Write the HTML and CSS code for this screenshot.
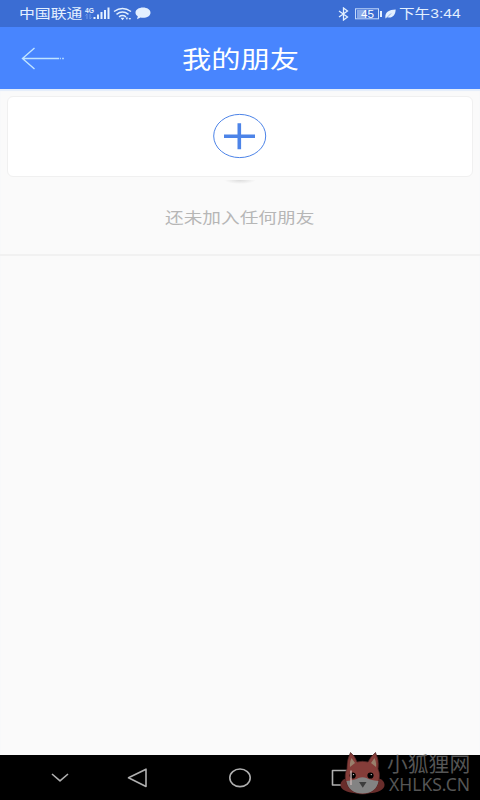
FILE: index.html
```html
<!DOCTYPE html>
<html lang="zh-CN">
<head>
    <meta charset="UTF-8">
    <meta name="viewport" content="width=device-width, initial-scale=1.0">
    <title>我的朋友</title>
    <link rel="stylesheet" href="styles.css">
</head>
<body>

<div class="screen">
    <div class="status-bar">
        <div class="status-left">
            <span class="carrier"><span class="wide">中国联通</span></span>
            <svg class="signal" width="26" height="15" viewBox="0 0 26 15">
                <text x="1" y="6.500" textLength="9" lengthAdjust="spacingAndGlyphs">4G</text>
                <path class="faint" d="M3 8v5M1.500 9.500L3 8M6 8v5M7.500 11.500L6 13"/>
                <path d="M10.500 11v2M14 8.500v4.500M17.500 6v7M21 4v9M24.500 1.500v11.500"/>
            </svg>
            <svg class="wifi" width="19" height="14" viewBox="0 0 19 14">
                <path d="M1 4.500Q9.500-1.500 18 4.500M3.500 7.300Q9.500 2.800 15.500 7.300M6 9.800Q9.500 7.400 13 9.800"/>
                <path class="fill" d="M7.500 10.800h4l-2 2.500zM12.500 10.500h2.500l-1 2.500zM15.500 11h2.500l-1 2z"/>
            </svg>
            <svg class="bubble" width="16" height="13" viewBox="0 0 16 13">
                <path d="M8 .5c4.200 0 7.500 2.200 7.500 5.200S12.200 10.800 8 10.800c-.9 0-1.700-.1-2.500-.3L2 12.300l.8-3C1.300 8.300.5 7.100.5 5.700.5 2.700 3.800.5 8 .5z"/>
            </svg>
        </div>
        <div class="status-right">
            <svg class="bluetooth" width="11" height="14" viewBox="0 0 11 14">
                <path d="M1 4l8.500 6-4 3V1l4 3L1 10"/>
            </svg>
            <svg class="battery" width="28" height="12" viewBox="0 0 28 12">
                <rect class="level" x="2" y="2" width="9" height="8"/>
                <rect class="case" x=".5" y=".8" width="23" height="10"/>
                <path d="M26 3v6"/>
                <text x="6" y="9.500" textLength="13" lengthAdjust="spacingAndGlyphs">45</text>
            </svg>
            <svg class="leaf" width="11" height="10" viewBox="0 0 11 10">
                <path d="M.5 9.500C-.5 4 3 .8 10.700.5 10.500 6.500 7 9.500 2.500 8.300z"/>
                <path class="vein" d="M1.500 9L6 4.500"/>
            </svg>
            <span class="time"><span class="wide">下午3:44</span></span>
        </div>
    </div>

    <div class="header">
        <svg class="back" width="45" height="24" viewBox="0 0 45 24">
            <path d="M13.500 2L1.500 12.500l12 10.500M1.500 12.500H38M38.800 12.500h1M41.200 12.500h1.600"/>
        </svg>
        <h1><span class="wide">我的朋友</span></h1>
    </div>

    <div class="content">
        <div class="card">
            <svg class="add" width="54" height="46" viewBox="0 0 54 46">
                <ellipse cx="26.700" cy="23" rx="26" ry="21.600"/>
                <path d="M11 23.300h31M26.300 10.300v26"/>
            </svg>
        </div>
        <div class="handle"></div>
        <p class="empty"><span class="wide">还未加入任何朋友</span></p>
    </div>

    <div class="nav-bar">
        <svg class="nav-icons" width="480" height="45" viewBox="0 0 480 45">
            <path d="M52 19l8 6.800L68 19"/>
            <path d="M146 14.200v17.300L128.500 22.800z"/>
            <ellipse cx="240" cy="22.800" rx="10.200" ry="8.800"/>
            <rect x="332.500" y="15.500" width="18.500" height="14.500"/>
        </svg>
        <div class="watermark">
            <svg class="fox" width="46" height="44" viewBox="0 0 46 44">
                <path class="tail" d="M7 27C1 29-1 33 1.500 37 5 41 12 42.500 22 42.500s18-1 21.500-5.500C46 33 44 29 38 27z"/>
                <path class="fur" d="M10.500 1.500Q6.500 9 7 18C4.500 22 5 29 6.500 32 9 39 15 43 22.500 43S36 39 38 32C40 27 40 22 38 18Q39.500 9 35.500 1.500 31 5 28 11q-5.500-1.500-11 0Q15 5 10.500 1.500z"/>
                <path class="ear" d="M11.500 7q-2 4-1.500 9l5-4zM34.500 7q2 4 1.500 9l-5-4z"/>
                <path class="face" d="M6.500 30q9-1 12-3 4-1.500 8 0 3 2 12 3C37.500 38 31 42.500 22.500 42.500S7.500 38 6.500 30z"/>
                <circle cx="12.700" cy="24.500" r="3.100"/>
                <circle cx="30.500" cy="24.500" r="3.100"/>
                <circle class="glint" cx="13.500" cy="23.600" r=".7"/>
                <circle class="glint" cx="31.300" cy="23.600" r=".7"/>
                <path class="nose" d="M19 31h7.500l-3.700 5.800z"/>
                <path class="edge" d="M11 19.500v14.500"/>
            </svg>
            <div class="site">
                <span class="site-name">小狐狸网</span>
                <span class="site-url">XHLKS.CN</span>
            </div>
        </div>
    </div>
</div>

</body>
</html>
```
FILE: styles.css
```css
body {
    margin: 0;
    font-family: "Noto Sans", "Noto Sans CJK SC", sans-serif;
    background-color: #fafafa;
}
svg {
    display: block;
    flex: none;
    fill: none;
}
.screen {
    display: flex;
    flex-direction: column;
    width: 480px;
    height: 800px;
}
.wide {
    display: inline-block;
    white-space: nowrap;
    transform: scaleX(1.22);
    transform-origin: left center;
}
.status-bar {
    display: flex;
    justify-content: space-between;
    height: 27px;
    padding: 0 19px 0 19px;
    box-sizing: border-box;
    background-color: #3b6dd3;
    color: #e3f0ff;
    font-size: 13px;
    line-height: 27px;
}
.status-left, .status-right {
    display: flex;
    align-items: center;
}
.carrier {
    width: 65px;
}
.time {
    width: 62px;
    margin-left: 3px;
    font-family: "Liberation Sans", "Noto Sans CJK SC", sans-serif;
}
.time .wide {
    transform: scaleX(1.2);
}
.signal {
    stroke: #e3f0ff;
    stroke-width: 2;
}
.signal text {
    font: bold 8px "Liberation Sans", sans-serif;
    fill: #e3f0ff;
    stroke: none;
}
.signal .faint {
    stroke: #739be8;
    stroke-width: 1;
}
.wifi {
    margin-left: 3px;
    stroke: #e3f0ff;
    stroke-width: 1.5;
}
.wifi .fill {
    fill: #e3f0ff;
    stroke: none;
}
.bubble {
    margin-left: 3px;
    fill: #e3f0ff;
}
.bluetooth {
    stroke: #e3f0ff;
    stroke-width: 1.3;
}
.battery {
    margin-left: 6px;
    stroke: #c5dafb;
}
.battery path {
    stroke: #e3f0ff;
    stroke-width: 2;
}
.battery .level {
    fill: #89a9e8;
    stroke: none;
}
.battery text {
    font: 10px "Liberation Sans", sans-serif;
    fill: #fff;
    stroke: none;
}
.leaf {
    margin-left: 2px;
    fill: #e3f0ff;
}
.leaf .vein {
    stroke: #3b6dd3;
    stroke-width: 0.5;
}
.header {
    display: flex;
    align-items: center;
    height: 62px;
    padding-left: 21px;
    background-color: #4885fe;
}
.back {
    stroke: #c0e4ff;
    stroke-width: 1.4;
}
h1 {
    width: 118px;
    margin: 0 0 0 116px;
    color: #fff;
    font-size: 24px;
    font-weight: 400;
    line-height: 62px;
    padding-top: 2px;
}
.content {
    flex: 1;
    background-color: #fafafa;
    box-shadow: inset 0 2px 1px #e3edfb;
}
.content::before {
    content: "";
    display: table;
}
.card {
    display: flex;
    justify-content: center;
    height: 81px;
    margin: 7px 7px 0;
    padding-top: 16px;
    box-sizing: border-box;
    border: 1px solid #f0f0f0;
    border-radius: 6px;
    background-color: #fff;
}
.add {
    stroke: #4d84e8;
}
.add path {
    stroke-width: 3.6;
}
.handle {
    width: 32px;
    height: 4px;
    margin: 3px auto 0;
    background: radial-gradient(ellipse at top, #dcdcdc, #fafafa 70%);
}
.empty {
    height: 70px;
    margin: 0;
    padding-left: 165px;
    border-bottom: 2px solid #f1f1f1;
    color: #b6b6b6;
    font-size: 15.3px;
    line-height: 67px;
}
.nav-bar {
    position: relative;
    height: 45px;
    background-color: #000;
}
.nav-icons {
    stroke: #b0b0b0;
    stroke-width: 1.6;
    stroke-linejoin: round;
}
/* site mark sits over the nav bar */
.watermark {
    position: absolute;
    top: -4px;
    right: 8px;
    display: flex;
    width: 132px;
}
.fox {
    fill: #000;
}
.fox .tail {
    fill: #692d2b;
}
.fox .fur {
    fill: #853d39;
    stroke: #4b2322;
    stroke-width: 0.7;
}
.fox .ear {
    fill: #99806c;
}
.fox .face {
    fill: #838383;
}
.fox .glint {
    fill: #ccc;
}
.fox .nose {
    fill: #3d3d3d;
}
.fox .edge {
    fill: none;
    stroke: #c9b4b2;
    stroke-width: 1.4;
}
.site {
    display: flex;
    flex-direction: column;
    color: #555;
    white-space: nowrap;
}
.site-name {
    height: 23px;
    margin-left: 1px;
    font-size: 20.8px;
    line-height: 26px;
}
.site-url {
    margin-left: 3px;
    font-size: 17.5px;
    line-height: 21px;
}
```
